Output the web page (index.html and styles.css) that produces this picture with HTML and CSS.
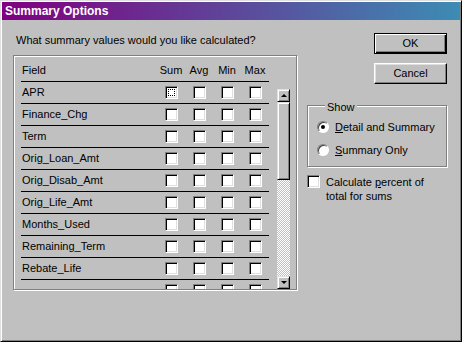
FILE: index.html
```html
<!DOCTYPE html>
<html lang="en">
<head>
    <meta charset="UTF-8">
    <title>Summary Options</title>
    <link rel="stylesheet" href="styles.css">
</head>
<body>
    <div class="window">
        <div class="titlebar">Summary Options</div>
        <div class="content">
            <div class="left">
                <p class="prompt">What summary values would you like calculated?</p>
                <div class="listbox">
                    <div class="rows">
                        <div class="row head">
                            <span class="name">Field</span>
                            <span class="cell">Sum</span>
                            <span class="cell">Avg</span>
                            <span class="cell">Min</span>
                            <span class="cell">Max</span>
                        </div>
                        <div class="row">
                            <span class="name">APR</span>
                            <span class="cell"><i class="cb focus"><i></i></i></span>
                            <span class="cell"><i class="cb"></i></span>
                            <span class="cell"><i class="cb"></i></span>
                            <span class="cell"><i class="cb"></i></span>
                        </div>
                        <div class="row">
                            <span class="name">Finance_Chg</span>
                            <span class="cell"><i class="cb"></i></span>
                            <span class="cell"><i class="cb"></i></span>
                            <span class="cell"><i class="cb"></i></span>
                            <span class="cell"><i class="cb"></i></span>
                        </div>
                        <div class="row">
                            <span class="name">Term</span>
                            <span class="cell"><i class="cb"></i></span>
                            <span class="cell"><i class="cb"></i></span>
                            <span class="cell"><i class="cb"></i></span>
                            <span class="cell"><i class="cb"></i></span>
                        </div>
                        <div class="row">
                            <span class="name">Orig_Loan_Amt</span>
                            <span class="cell"><i class="cb"></i></span>
                            <span class="cell"><i class="cb"></i></span>
                            <span class="cell"><i class="cb"></i></span>
                            <span class="cell"><i class="cb"></i></span>
                        </div>
                        <div class="row">
                            <span class="name">Orig_Disab_Amt</span>
                            <span class="cell"><i class="cb"></i></span>
                            <span class="cell"><i class="cb"></i></span>
                            <span class="cell"><i class="cb"></i></span>
                            <span class="cell"><i class="cb"></i></span>
                        </div>
                        <div class="row">
                            <span class="name">Orig_Life_Amt</span>
                            <span class="cell"><i class="cb"></i></span>
                            <span class="cell"><i class="cb"></i></span>
                            <span class="cell"><i class="cb"></i></span>
                            <span class="cell"><i class="cb"></i></span>
                        </div>
                        <div class="row">
                            <span class="name">Months_Used</span>
                            <span class="cell"><i class="cb"></i></span>
                            <span class="cell"><i class="cb"></i></span>
                            <span class="cell"><i class="cb"></i></span>
                            <span class="cell"><i class="cb"></i></span>
                        </div>
                        <div class="row">
                            <span class="name">Remaining_Term</span>
                            <span class="cell"><i class="cb"></i></span>
                            <span class="cell"><i class="cb"></i></span>
                            <span class="cell"><i class="cb"></i></span>
                            <span class="cell"><i class="cb"></i></span>
                        </div>
                        <div class="row">
                            <span class="name">Rebate_Life</span>
                            <span class="cell"><i class="cb"></i></span>
                            <span class="cell"><i class="cb"></i></span>
                            <span class="cell"><i class="cb"></i></span>
                            <span class="cell"><i class="cb"></i></span>
                        </div>
                        <div class="row">
                            <span class="name"></span>
                            <span class="cell"><i class="cb"></i></span>
                            <span class="cell"><i class="cb"></i></span>
                            <span class="cell"><i class="cb"></i></span>
                            <span class="cell"><i class="cb"></i></span>
                        </div>
                    </div>
                    <div class="scrollbar">
                        <div class="sb-btn"><i class="arrow-up"></i></div>
                        <div class="sb-thumb"></div>
                        <div class="sb-track"></div>
                        <div class="sb-btn"><i class="arrow-down"></i></div>
                    </div>
                </div>
            </div>
            <div class="right">
                <button class="btn default">OK</button>
                <button class="btn">Cancel</button>
                <fieldset class="group">
                    <legend>Show</legend>
                    <div class="option"><i class="radio on"></i><span><u>D</u>etail and Summary</span></div>
                    <div class="option"><i class="radio"></i><span><u>S</u>ummary Only</span></div>
                </fieldset>
                <div class="check">
                    <i class="cb"></i>
                    <span>Calculate <u>p</u>ercent of<br>total for sums</span>
                </div>
            </div>
        </div>
    </div>
</body>
</html>
```

FILE: styles.css
```css
body {
    margin: 0;
    background-color: #c0c0c0;
    font-family: "Liberation Sans", Arial, sans-serif;
    font-size: 11px;
    line-height: 13px;
    color: black;
}
.window {
    width: 462px;
    height: 342px;
    box-sizing: border-box;
    border: 1px solid;
    border-color: #dfdfdf #000 #000 #dfdfdf;
    padding: 1px;
    box-shadow: inset 1px 1px #fff, inset -1px -1px #808080;
    background-color: #c0c0c0;
}
.titlebar {
    height: 18px;
    line-height: 18px;
    padding-left: 3px;
    font-size: 12px;
    font-weight: bold;
    color: white;
    background: linear-gradient(to right, #800080, #3c8cb4);
}
.content {
    display: flex;
    padding-left: 11px;
    gap: 10px;
}
.prompt {
    margin: 14px 0 0 3px;
}
.listbox {
    margin-top: 8px;
    width: 284px;
    height: 235px;
    box-sizing: border-box;
    border: 1px solid #808080;
    box-shadow: inset 1px 1px #fff, 1px 1px #fff;
    padding: 4px 0 0 7px;
    display: flex;
    overflow: hidden;
}
.rows {
    width: 248px;
    flex: none;
}
.row {
    height: 22px;
    box-sizing: border-box;
    border-bottom: 1px solid black;
    display: flex;
    align-items: center;
}
.name {
    width: 135px;
    padding-left: 1px;
}
.cell {
    width: 28px;
    display: flex;
    justify-content: center;
}
.cb {
    display: block;
    width: 13px;
    height: 13px;
    box-sizing: border-box;
    background-color: white;
    border: 1px solid;
    border-color: #808080 #fff #fff #808080;
    box-shadow: inset 1px 1px #000, inset -1px -1px #dfdfdf;
    padding: 2px;
}
.cb.focus i {
    display: block;
    width: 100%;
    height: 100%;
    box-sizing: border-box;
    border: 1px dotted black;
}
.scrollbar {
    margin: 29px 0 0 8px;
    width: 13px;
    height: 200px;
    display: flex;
    flex-direction: column;
}
.sb-btn, .sb-thumb {
    box-sizing: border-box;
    border: 1px solid;
    border-color: #dfdfdf #000 #000 #dfdfdf;
    box-shadow: inset 1px 1px #fff, inset -1px -1px #808080;
    background-color: #c0c0c0;
}
.sb-btn {
    height: 13px;
    display: flex;
    align-items: center;
    justify-content: center;
}
.sb-thumb {
    height: 78px;
}
.sb-track {
    flex: 1;
    background: repeating-conic-gradient(#fff 0 25%, #c0c0c0 0 50%) 0 0 / 2px 2px;
}
.arrow-up, .arrow-down {
    width: 0;
    height: 0;
    border-left: 3px solid transparent;
    border-right: 3px solid transparent;
}
.arrow-up {
    border-bottom: 3px solid black;
}
.arrow-down {
    border-top: 3px solid black;
}
.right {
    width: 140px;
    display: flex;
    flex-direction: column;
}
.btn {
    align-self: flex-end;
    width: 73px;
    height: 21px;
    margin-top: 9px;
    padding: 0;
    font: inherit;
    color: black;
    background-color: #c0c0c0;
    border: 1px solid;
    border-color: #fff #000 #000 #fff;
    box-shadow: inset -1px -1px #808080, inset 1px 1px #dfdfdf;
}
.btn.default {
    margin-top: 13px;
    border: 1px solid black;
    box-shadow: inset 1px 1px #fff, inset -1px -1px #000, inset -2px -2px #808080;
}
.group {
    margin: 13px 0 0;
    padding: 0 8px 8px 9px;
    border: 1px solid #808080;
    box-shadow: inset 1px 1px #fff, 1px 1px #fff;
}
.group legend {
    padding: 4px 2px 0;
    margin-left: 8px;
    background-color: #c0c0c0;
}
.option {
    display: flex;
    align-items: center;
    gap: 6px;
    height: 16px;
    margin-top: 5px;
}
.option + .option {
    margin-top: 7px;
}
.radio {
    display: block;
    width: 12px;
    height: 12px;
    box-sizing: border-box;
    border-radius: 50%;
    border: 1px solid;
    border-color: #808080 #fff #fff #808080;
    background-color: white;
    box-shadow: inset 1px 1px #404040;
    position: relative;
}
.radio.on::after {
    content: "";
    position: absolute;
    left: 3px;
    top: 3px;
    width: 4px;
    height: 4px;
    border-radius: 50%;
    background-color: black;
}
.check {
    margin-top: 8px;
    display: flex;
    align-items: flex-start;
    gap: 6px;
    line-height: 14px;
}
```
